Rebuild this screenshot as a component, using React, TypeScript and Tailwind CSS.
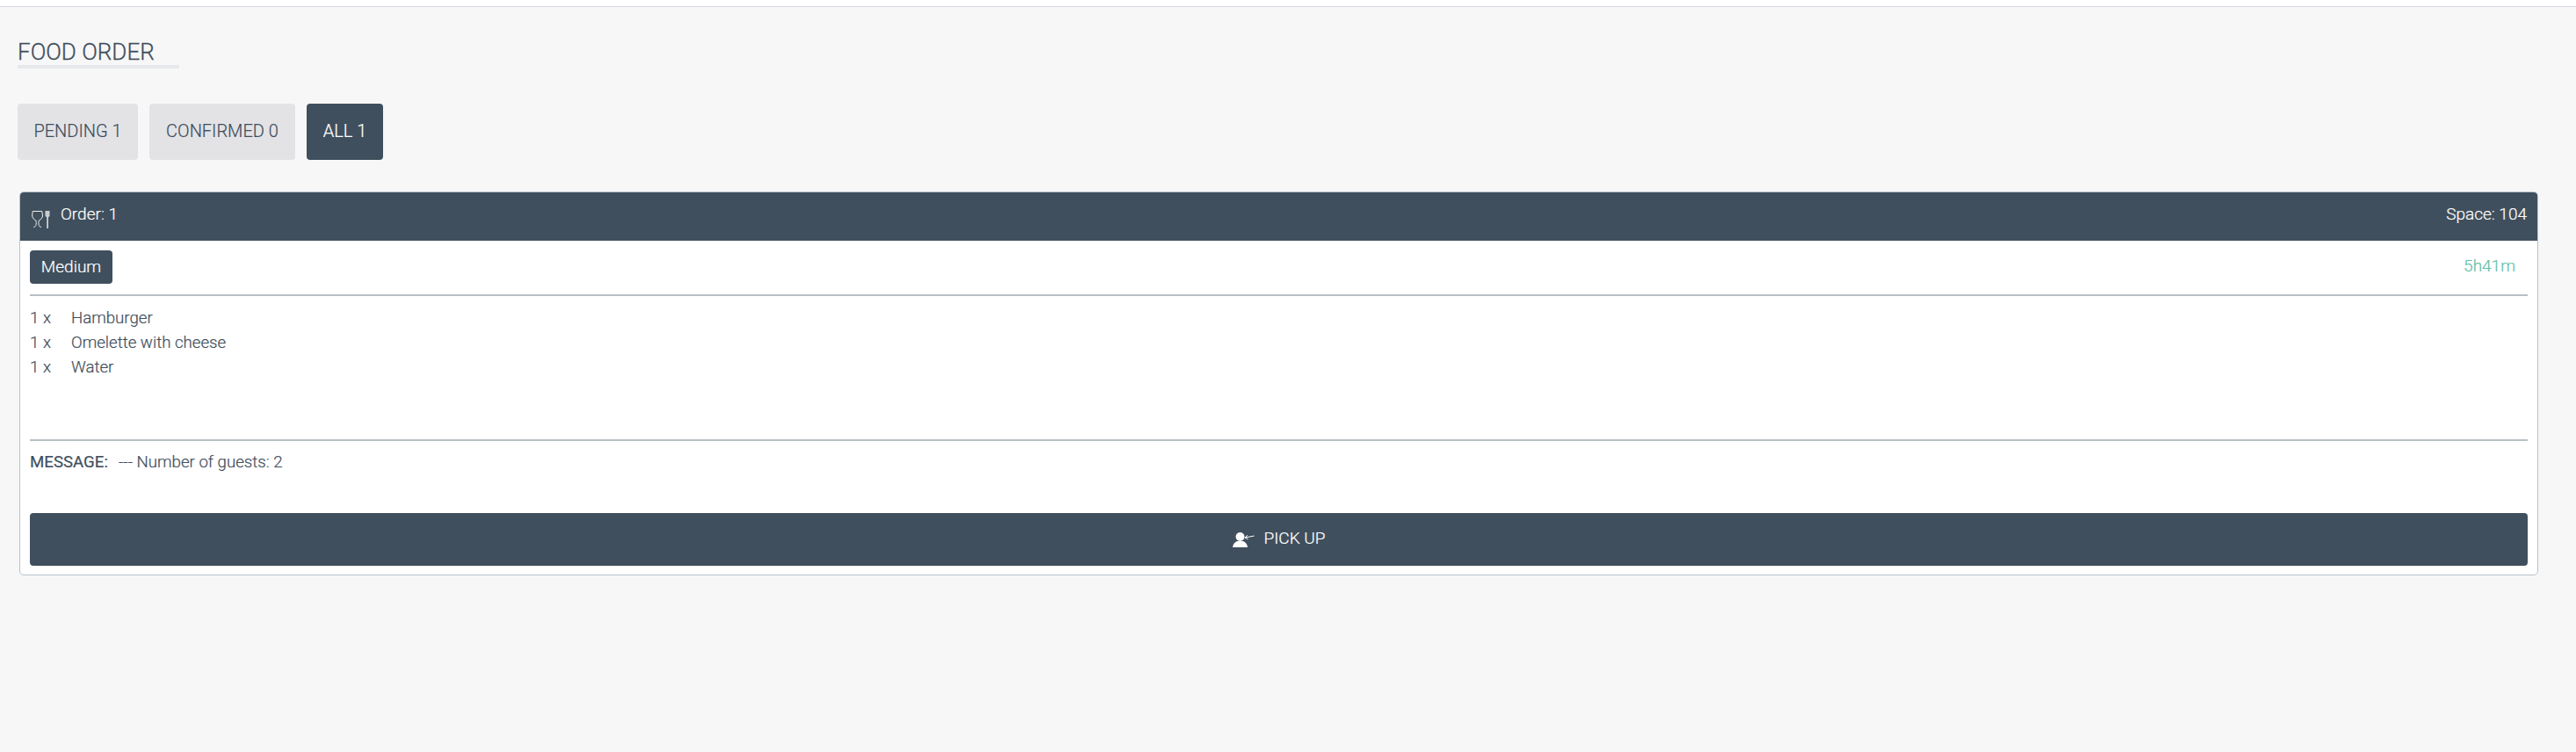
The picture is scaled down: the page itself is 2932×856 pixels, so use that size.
import React from 'react';

const items = ['Hamburger', 'Omelette with cheese', 'Water'];

const DiningIcon: React.FC = () => (
  <svg width="21" height="21" viewBox="0 0 21 21" fill="none" stroke="#fff" strokeWidth="1" className="mt-1.5 opacity-90">
    <path d="M1.200 1.500h10.600l.7 4.500c.3 3-2 4.800-4.200 6-.5 1.700-.4 4 0 5.500.3 1 1.200 1.800 2.700 2" />
    <path d="M1.200 1.500.7 6c-.3 3 2 4.800 4.200 6 .5 1.700.4 4 0 5.500-.3 1-1.200 1.800-2.700 2" />
    <path d="M15.500 1h5v6l-1.500 1.200V21h-1.800V8.200L15.500 7z" fill="#fff" fillOpacity="0.8" stroke="none" />
  </svg>
);

const PickupIcon: React.FC = () => (
  <svg width="25" height="17" viewBox="0 0 25 17" fill="#fff">
    <circle cx="8.500" cy="5" r="5" />
    <path d="M0 17c.5-4 2.500-6 5-7h7c2.500 1 4.500 3 5 7z" />
    <path d="M14 6l10.500-2M14 6l3-2.800M14 6l3.500 1.800" stroke="#fff" strokeWidth="1" fill="none" />
  </svg>
);

const App: React.FC = () => {
  return (
    <div className="h-[856px] bg-[#f7f7f7] font-['Roboto',sans-serif] text-[#3f4e5d] font-[350] [-webkit-text-stroke:0.2px] overflow-hidden">
      <div className="h-2 bg-white border-b border-[#d9dae3]"></div>

      <div className="px-5 pt-[34px]">
        <div className="w-[184px] h-[36px] border-b-4 border-[#e8e9ec] text-[26px] leading-[34px] font-light whitespace-nowrap [-webkit-text-stroke:0.3px_#3f4e5d]">
          FOOD ORDER
        </div>

        <div className="flex gap-[13px] mt-10">
          <button className="h-16 w-[137px] rounded bg-[#e3e3e6] text-[20px] font-[350] pb-0.5">PENDING 1</button>
          <button className="h-16 w-[166px] rounded bg-[#e3e3e6] text-[20px] font-[350] pb-0.5">CONFIRMED 0</button>
          <button className="h-16 w-[87px] rounded bg-[#404f5d] text-white text-[20px] font-[350] pb-0.5">ALL 1</button>
        </div>

        <div className="mt-9 ml-0.5 w-[2867px] bg-white border border-[#b8c2cc] rounded-[5px] overflow-hidden">
          <div className="-mx-px -mt-px h-[56px] bg-[#404f5d] text-white text-[19px] font-[350] flex items-center justify-between pl-3.5 pr-[13px]">
            <div className="flex items-center gap-[12px]">
              <DiningIcon />
              <span className="-mt-[3px]">Order: 1</span>
            </div>
            <span className="-mt-[3px]">Space: 104</span>
          </div>

          <div className="px-[11px] pb-[10px]">
            <div className="flex items-center justify-between pt-[11px] pr-3.5">
              <span className="h-[38px] w-[94px] rounded bg-[#404f5d] text-white text-[19px] font-[350] flex items-center justify-center">
                Medium
              </span>
              <span className="text-[#62c0a8] text-[19px] -mt-0.5">5h41m</span>
            </div>

            <div className="mt-3 h-0.5 bg-[#b8c0c4]"></div>

            <div className="h-[163px] pt-[11px] text-[18.67px] leading-7">
              {items.map((item) => (
                <div key={item} className="flex">
                  <span className="w-[47px]">1 x</span>
                  <span>{item}</span>
                </div>
              ))}
            </div>

            <div className="h-0.5 bg-[#b8c0c4]"></div>

            <div className="h-[82px] pt-[10px] text-[18.67px] leading-7 whitespace-nowrap">
              <span className="font-normal">MESSAGE:</span>
              <span className="ml-3">--- Number of guests: 2</span>
            </div>

            <button className="w-full h-[60px] rounded bg-[#404f5d] text-white text-[19px] font-[350] flex items-center justify-center gap-[11px]">
              <PickupIcon />
              <span className="-mt-px">PICK UP</span>
            </button>
          </div>
        </div>
      </div>
    </div>
  );
};

export default App;
